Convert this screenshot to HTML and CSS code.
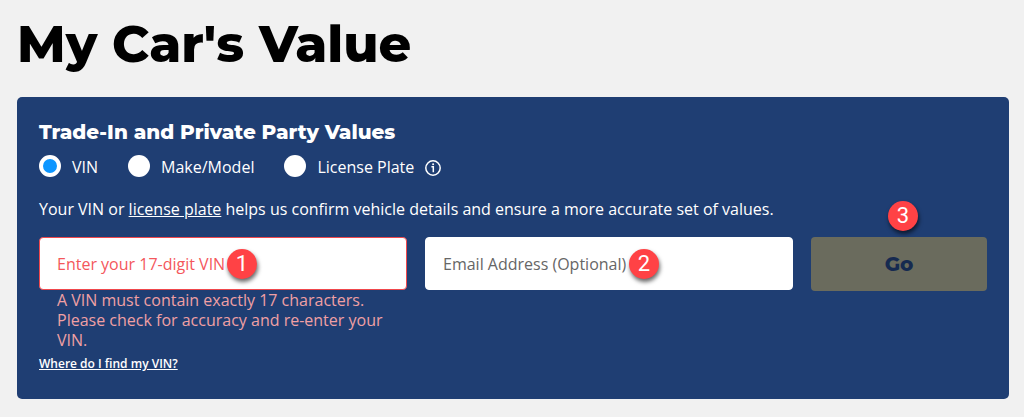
FILE: index.html
```html
<!DOCTYPE html>
<html lang="en">
<head>
	<meta charset="utf-8">
	<meta name="viewport" content="width=device-width, initial-scale=1">
	<title>My Car's Value</title>
	<link rel="stylesheet" href="styles.css">
</head>
<body>
	<main class="page">
		<h1>My Car's Value</h1>
		<form class="card">
			<h2>Trade-In and Private Party Values</h2>
			<div class="options">
				<label class="option"><input type="radio" name="lookup" value="vin" checked><span>VIN</span></label>
				<label class="option"><input type="radio" name="lookup" value="model"><span>Make/Model</span></label>
				<div class="option-group">
					<label class="option"><input type="radio" name="lookup" value="plate"><span>License Plate</span></label>
					<button type="button" class="info" aria-label="About license plate lookup">
						<svg width="16" height="16" viewBox="0 0 16 16" fill="none" stroke="#fff">
							<circle cx="8" cy="8" r="7.2" stroke-width="1.5"/>
							<path d="M6.4 6.7h1.9v5.5" stroke-width="1.5"/>
							<circle cx="8.1" cy="4.2" r="1" fill="#fff" stroke="none"/>
						</svg>
					</button>
				</div>
			</div>
			<p class="intro">Your VIN or <a href="#plate">license plate</a> helps us confirm vehicle details and ensure a more accurate set of values.</p>
			<div class="fields">
				<div class="field">
					<input class="has-error" type="text" id="vin" placeholder="Enter your 17-digit VIN" aria-label="Enter your 17-digit VIN" aria-describedby="vin-error">
					<span class="badge badge-vin">1</span>
					<p class="error" id="vin-error">A VIN must contain exactly 17 characters. Please check for accuracy and re-enter your VIN.</p>
				</div>
				<div class="field">
					<input type="email" id="email" placeholder="Email Address (Optional)" aria-label="Email Address (Optional)">
					<span class="badge badge-email">2</span>
				</div>
				<div class="field">
					<button class="go" type="submit" disabled>Go</button>
					<span class="badge badge-go">3</span>
				</div>
			</div>
			<a class="help" href="#find-vin">Where do I find my VIN?</a>
		</form>
	</main>
</body>
</html>
```
FILE: styles.css
```css
* {
	box-sizing: border-box;
}
body {
	margin: 0;
	background-color: #f1f1f1;
	color: #000;
	font: 16px/20px "Open Sans", sans-serif;
}
h1, h2, p {
	margin: 0;
}
h1, h2, .go {
	font-family: Montserrat, Inter, sans-serif;
	font-weight: 800;
}
.page {
	padding: 14px 15px 18px 17px;
}
h1 {
	margin-bottom: 23px;
	font-size: 51px;
	line-height: 60px;
}
.card {
	padding: 22px 22px 25px;
	border-radius: 5px;
	background-color: #1f3e73;
	color: #fff;
}
h2 {
	font-size: 20px;
	line-height: 26px;
}
.options {
	display: flex;
	flex-wrap: wrap;
	gap: 30px;
	margin-top: 10px;
}
.option, .option-group {
	display: flex;
	align-items: flex-start;
	gap: 11px;
}
.option span {
	padding-top: 2px;
}
.option input {
	appearance: none;
	width: 22px;
	height: 22px;
	margin: 0;
	border-radius: 50%;
	background-color: #fff;
}
.option input:checked {
	border: 4px solid #fff;
	background-color: #0d96ff;
}
.info {
	display: flex;
	padding: 5px 0 0;
	border: 0;
	background: none;
}
.intro {
	margin: 22px 0 18px;
}
.intro a, .help {
	color: inherit;
}
.fields {
	display: grid;
	grid-template-columns: 23fr 23fr 11fr;
	gap: 18px;
}
.field {
	position: relative;
}
.field input {
	display: block;
	width: 100%;
	height: 53px;
	padding: 0 17px;
	border: 1px solid #fff;
	border-radius: 4px;
	background-color: #fff;
	font: inherit;
}
.field input::placeholder {
	color: #666;
	opacity: 1;
}
.field .has-error {
	border-color: #f0484c;
}
.field .has-error::placeholder {
	color: #f4575c;
}
.error {
	padding: 0 18px;
	color: #f0a0a4;
}
.go {
	width: 100%;
	height: 54px;
	border: 0;
	border-radius: 4px;
	background-color: #6a6b5d;
	color: #162a50;
	font-size: 20px;
}
.badge {
	position: absolute;
	width: 30px;
	height: 30px;
	border-radius: 50%;
	background-color: #ff4245;
	box-shadow: 1px 3px 4px rgba(0, 0, 0, 0.6);
	color: #fff;
	font: 22px/30px Roboto, sans-serif;
	text-align: center;
}
.badge-vin {
	top: 12px;
	left: 188px;
}
.badge-email {
	top: 12px;
	left: 204px;
}
.badge-go {
	top: -36px;
	left: 77px;
}
.help {
	display: inline-block;
	margin-top: 4px;
	font-size: 12px;
	font-weight: 600;
}
```
